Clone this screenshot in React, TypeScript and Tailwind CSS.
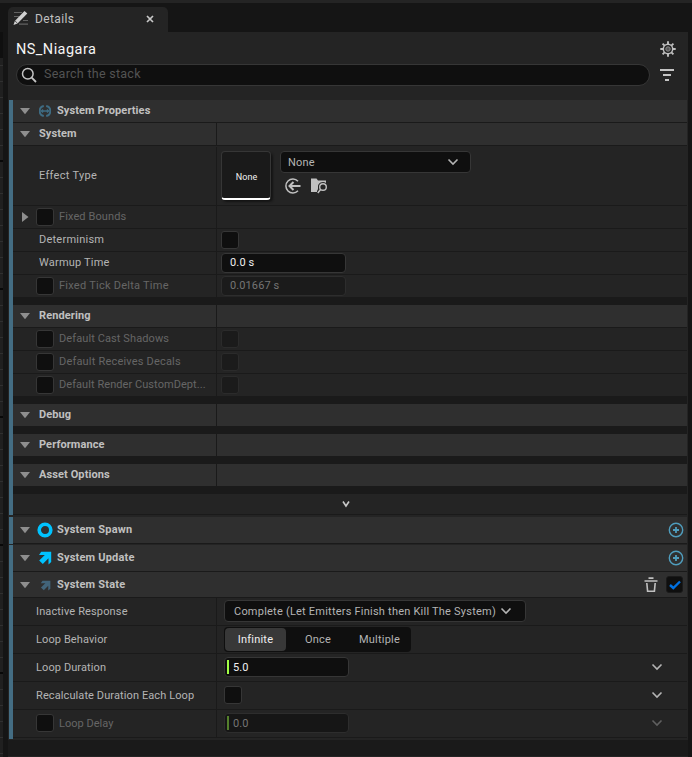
import type { ReactNode } from "react";

const Arrow = ({ open = true }: { open?: boolean }) => (
  <svg width="12" height="12" viewBox="0 0 12 12" className="shrink-0" fill="#8e8e8e">
    {open ? <path d="M1 3h10L6 9.3z" /> : <path d="M3 1v10l6.5-5z" />}
  </svg>
);

const Chevron = ({ className = "" }: { className?: string }) => (
  <svg width="12" height="8" viewBox="0 0 12 8" fill="none" stroke="currentColor" strokeWidth="1.6" className={className}>
    <path d="M1.500 1.500L6 6l4.500-4.500" />
  </svg>
);

const Box = ({ dim = false }: { dim?: boolean }) => (
  <span
    className={
      dim
        ? "w-[18px] h-[18px] shrink-0 rounded-[3px] border border-[#2b2b2b] bg-[#1b1b1b]"
        : "w-[18px] h-[18px] shrink-0 rounded-[3px] border border-[#363636] bg-[#0f0f0f]"
    }
  />
);

const Category = ({ name, gap = false }: { name: string; gap?: boolean }) => (
  <div className={gap ? "flex h-[30px] border-b-8 border-[#1a1a1a] bg-[#2f2f2f]" : "flex h-[23px] border-b border-[#1a1a1a] bg-[#2f2f2f]"}>
    <div className="flex items-center w-[204px] pl-[6px] border-r border-[#1a1a1a]">
      <Arrow />
      <span className="ml-2 font-bold tracking-[0.1px] text-[#c0c0c0] -mt-px">{name}</span>
    </div>
  </div>
);

type PropProps = {
  name: string;
  height?: string;
  tracking?: string;
  check?: boolean;
  arrow?: boolean;
  children?: ReactNode;
};

const Prop = ({ name, height = "h-[23px]", tracking = "tracking-[0.14px]", check, arrow, children }: PropProps) => (
  <div className={`flex border-b border-[#1a1a1a] bg-[#242424] ${height}`}>
    <div className={`flex items-center w-[204px] shrink-0 border-r border-[#1a1a1a] ${check ? "pl-[23px]" : "pl-[26px]"}`}>
      {arrow && <span className="-ml-[17px] mr-[5px]"><Arrow open={false} /></span>}
      {check && <Box />}
      <span className={`-mt-px whitespace-nowrap ${tracking} ${check ? "ml-[5px] text-[#666]" : ""}`}>{name}</span>
    </div>
    <div className="flex flex-1 items-center">{children}</div>
  </div>
);

// taller rows of the module inputs
const ModuleProp = ({ name, tracking = "tracking-[0.1px]", check, children }: PropProps) => (
  <div className="flex h-7 border-b border-[#1a1a1a] bg-[#242424]">
    <div className="flex items-start w-[204px] shrink-0 border-r border-[#1a1a1a] pl-[23px]">
      {check && <span className="flex mt-1"><Box /></span>}
      <span className={`mt-[7px] whitespace-nowrap ${tracking} ${check ? "ml-[5px] text-[#666]" : ""}`}>{name}</span>
    </div>
    <div className="flex flex-1 items-center pb-px pl-[7px]">{children}</div>
  </div>
);

const UpArrow = ({ size, color }: { size: number; color: string }) => (
  <svg width={size} height={size} viewBox="0 0 14 14" fill={color}>
    <path d="M3.200 .8H13.200v10.200l-2.700 2.500V7.300L4.800 13 1.200 9.400 6.800 4H1z" />
  </svg>
);

const Plus = () => (
  <svg width="16" height="16" viewBox="0 0 16 16" fill="none" stroke="#4f9dbd" className="mr-[3px]">
    <circle cx="8" cy="8" r="6.700" strokeWidth="1.400" />
    <path d="M8 5v6M5 8h6" strokeWidth="1.800" />
  </svg>
);

type HeaderProps = {
  name: string;
  icon: ReactNode;
  height: string;
  tracking?: string;
  children?: ReactNode;
};

const Header = ({ name, icon, height, tracking = "tracking-[0.2px]", children }: HeaderProps) => (
  <div className={`flex items-center border-b border-[#1a1a1a] bg-[#2f2f2f] pl-[6px] ${height}`}>
    <Arrow />
    <span className="flex justify-center w-4 ml-[6px]">{icon}</span>
    <span className={`ml-1 font-bold text-[#c0c0c0] -mt-px ${tracking}`}>{name}</span>
    <div className="flex flex-1 items-center justify-end">{children}</div>
  </div>
);

const Input = ({ value, dim }: { value: string; dim?: boolean }) => (
  <div
    className={`flex items-center w-[125px] h-5 ml-1 rounded-[4px] border pl-2 ${
      dim ? "border-[#2d2d2d] bg-[#1b1b1b] text-[#757575]" : "border-[#363636] bg-[#0f0f0f] text-[#f0f0f0]"
    }`}
  >
    <span className={dim ? "-mt-px tracking-[0.1px]" : "-mt-px tracking-[0.15px]"}>{value}</span>
  </div>
);

const ModuleInput = ({ value, dim }: { value: string; dim?: boolean }) => (
  <div
    className={`flex items-center w-[125px] h-5 rounded-[4px] border pl-[2px] ${
      dim ? "border-[#2d2d2d] bg-[#161616] text-[#757575]" : "border-[#363636] bg-[#0f0f0f] text-[#f0f0f0]"
    }`}
  >
    <span className={`w-[2px] h-[14px] mr-1 ${dim ? "bg-[#54802c]" : "bg-[#a1ff45]"}`} />
    <span className="tracking-[0.1px] mt-px">{value}</span>
  </div>
);

// strip of the graph editor that shows on the left of the panel
const GraphEdge = () => (
  <div className="w-[3px] mt-[29px] bg-[#202020] border-t-[26px] border-[#0f0f0f] overflow-hidden">
    <div className="-mt-2">
      {Array.from({ length: 44 }, (_, i) => (
        <div key={i} className={i % 8 === 6 ? "h-4 border-b-2 border-[#080808]" : "h-4 border-b border-[#303030]"} />
      ))}
    </div>
  </div>
);

const App = () => {
  return (
    <div className="flex flex-col w-[692px] h-[757px] overflow-hidden bg-[#151515] border-t-[3px] border-[#242424] font-[Roboto,sans-serif] text-[11px] leading-[14px] tracking-[0.22px] text-[#b4b4b4]">
      <div className="flex flex-1 min-h-0">
        <GraphEdge />
        <div className="flex flex-col w-[680px] ml-[5px] pt-1">
          <div className="flex items-center shrink-0 w-40 h-[25px] rounded-t-[5px] bg-[#242424] pl-[5px]">
            <svg width="16" height="16" viewBox="0 0 16 16" className="-mt-[3px]">
              <path d="M1 2.500h8M1 6.500h5M10 10.500h5M6 14.200h9" stroke="#626262" strokeWidth="1.200" />
              <path d="M0.500 15l1.300-4L11.500 1l2.800 2.600L4.500 13.600z" fill="#d0d0d0" />
              <path d="M1.900 10.800l2.600 2.500" stroke="#242424" strokeWidth="0.700" />
            </svg>
            <span className="ml-[6px] -mt-px text-[12px] leading-4 tracking-[0.38px] text-[#c0c0c0]">Details</span>
            <svg width="8" height="8" viewBox="0 0 8 8" stroke="#c8c8c8" strokeWidth="1.700" className="ml-auto mr-[14px] -mt-[2px]">
              <path d="M1 1l6 6M7 1L1 7" />
            </svg>
          </div>

          <div className="flex flex-col flex-1 min-h-0 bg-[#242424]">
            <div className="flex items-center justify-between h-[33px] shrink-0 pl-2 pr-3">
              <span className="mt-[2px] text-[14.500px] leading-5 tracking-[0.45px] text-[#f5f5f5]">NS_Niagara</span>
              <svg width="16" height="16" viewBox="0 0 16 16" fill="none" stroke="#c0c0c0">
                <circle cx="8" cy="8" r="4.700" strokeWidth="1.500" />
                <circle cx="8" cy="8" r="2.200" strokeWidth="1" stroke="#8a8a8a" fill="#555" />
                <path d="M8 .3v3M8 12.700v3M.3 8h3M12.700 8h3M2.600 2.600l2 2M11.400 11.400l2 2M2.600 13.400l2-2M11.400 4.600l2-2" strokeWidth="1.900" />
              </svg>
            </div>
            <div className="flex items-start h-[35px] shrink-0 pl-2">
              <div className="flex items-center w-[634px] h-[22px] rounded-full border border-[#363636] bg-[#0f0f0f] -mt-px">
                <svg width="16" height="16" viewBox="0 0 16 16" fill="none" stroke="#c4c4c4" className="ml-1">
                  <circle cx="6.800" cy="6.800" r="5.300" strokeWidth="1.500" />
                  <path d="M10.700 10.700l4.300 4.300" strokeWidth="1.800" />
                </svg>
                <span className="ml-[7px] -mt-[2px] text-[12.500px] tracking-[0.27px] text-[#535353]">Search the stack</span>
              </div>
              <svg width="16" height="14" viewBox="0 0 16 14" stroke="#c4c4c4" strokeWidth="2" className="ml-[9px] mt-[3px]">
                <path d="M1 2h14M4 7h8M6 12h4" />
              </svg>
            </div>

            <div className="flex flex-col h-[656px] shrink-0 ml-px mr-px">
              <div className="shrink-0 h-[415px] border-l-4 border-[#446d83]">
                <Header
                  name="System Properties"
                  height="h-[23px]"
                  tracking="tracking-[0.1px]"
                  icon={
                    <svg width="12" height="12" viewBox="0 0 12 12" fill="none" stroke="#3e6b82" strokeWidth="2">
                      <path d="M4.800 1A5.100 5.100 0 0 0 4.800 11M7.200 1A5.100 5.100 0 0 1 7.200 11" />
                      <path d="M2 6h8M4 4.500L2.500 6 4 7.500M8 4.500L9.500 6 8 7.500" strokeWidth="1.400" />
                    </svg>
                  }
                />
                <Category name="System" />
                <Prop name="Effect Type" height="h-[60px] pt-px" tracking="tracking-[0.3px]">
                  <div className="flex items-center justify-center self-start w-[50px] h-[49px] ml-1 mt-1 rounded-[4px] border border-[#363636] border-b-2 border-b-white bg-[#1a1a1a] pt-[4px] pl-px text-[9px] tracking-[0.1px] text-[#f0f0f0] shadow-[2px_2px_2px_#151515]">
                    None
                  </div>
                  <div className="flex flex-col self-start ml-[9px] mt-1">
                    <div className="flex items-center justify-between w-[191px] h-[22px] pl-[7px] pr-[11px] rounded-[4px] border border-[#363636] bg-[#0f0f0f]">
                      <span className="mt-px">None</span>
                      <Chevron className="-mt-px" />
                    </div>
                    <div className="flex gap-[10px] ml-[5px] mt-[5px]">
                      <svg width="16" height="16" viewBox="0 0 16 16" fill="none" stroke="#c0c0c0">
                        <path d="M13 3.200A7 7 0 1 0 13 12.800" strokeWidth="1.500" />
                        <path d="M15.500 8H5M8.500 4L4.500 8l4 4" strokeWidth="2" />
                      </svg>
                      <svg width="17" height="16" viewBox="0 0 17 16" fill="#c0c0c0">
                        <path d="M0 .5H5.500l1.500 2H15V5A5 5 0 0 0 7 9.500c0 1.500 0 2-1 3.500v1H0z" />
                        <circle cx="12" cy="9" r="3.300" fill="none" stroke="#c0c0c0" strokeWidth="1.400" />
                        <path d="M9.600 11.500L6.800 15" stroke="#c0c0c0" strokeWidth="1.500" />
                      </svg>
                    </div>
                  </div>
                </Prop>
                <Prop name="Fixed Bounds" check arrow tracking="tracking-[0.1px]" />
                <Prop name="Determinism" tracking="tracking-[0.24px]">
                  <span className="flex ml-1"><Box /></span>
                </Prop>
                <Prop name="Warmup Time" tracking="tracking-[0.2px]">
                  <Input value="0.0 s" />
                </Prop>
                <Prop name="Fixed Tick Delta Time" check height="h-[22px] border-b-0" tracking="tracking-[0.25px]">
                  <Input value="0.01667 s" dim />
                </Prop>
                <div className="h-2 bg-[#1a1a1a]" />
                <Category name="Rendering" />
                <Prop name="Default Cast Shadows" check tracking="tracking-[0.1px]">
                  <span className="flex ml-1"><Box dim /></span>
                </Prop>
                <Prop name="Default Receives Decals" check tracking="tracking-[0.19px]">
                  <span className="flex ml-1"><Box dim /></span>
                </Prop>
                <Prop name="Default Render CustomDept..." check height="h-[22px] border-b-0" tracking="tracking-[0.06px]">
                  <span className="flex ml-1"><Box dim /></span>
                </Prop>
                <div className="h-2 bg-[#1a1a1a]" />
                <Category name="Debug" gap />
                <Category name="Performance" gap />
                <Category name="Asset Options" gap />
                <div className="flex items-center justify-center h-[21px] border-b border-[#1a1a1a] bg-[#242424]">
                  <svg width="8" height="8" viewBox="0 0 8 8" fill="none" stroke="#c8c8c8" strokeWidth="1.600" className="mr-[9px]">
                    <path d="M1 1.500l3 4.500 3-4.500" />
                  </svg>
                </div>
              </div>

              <div className="shrink-0 mt-[2px] border-l-4 border-[#446d83]">
                <Header
                  name="System Spawn"
                  height="h-[27px]"
                  icon={
                    <svg width="16" height="16" viewBox="0 0 16 16" fill="none" stroke="#00c3ff" strokeWidth="3.600">
                      <circle cx="8" cy="8" r="5.800" />
                    </svg>
                  }
                >
                  <Plus />
                </Header>
              </div>

              <div className="shrink-0 mt-px border-l-4 border-[#446d83] bg-[#242424] pb-px">
                <Header name="System Update" height="h-[27px]" icon={<UpArrow size={14} color="#00c3ff" />}>
                  <Plus />
                </Header>
                <Header name="System State" height="h-[26px] pt-px" icon={<UpArrow size={11} color="#42647a" />}>
                  <svg width="16" height="16" viewBox="0 0 16 16" fill="none" stroke="#c0c0c0" className="-mt-px">
                    <path d="M5.500 1.200h5M1.500 4h13" strokeWidth="1.700" />
                    <path d="M3.800 6l.8 8.200h6.800l.8-8.200" strokeWidth="1.600" />
                  </svg>
                  <span className="flex items-center justify-center w-[17px] h-[17px] -mt-px ml-[7px] mr-1 rounded-[3px] border border-[#1a1a1a] bg-[#0f0f0f]">
                    <svg width="12" height="10" viewBox="0 0 12 10" fill="none" stroke="#0070e0" strokeWidth="2.400">
                      <path d="M1 5l3.300 3L11 1.500" />
                    </svg>
                  </span>
                </Header>
                <ModuleProp name="Inactive Response" tracking="tracking-[0.14px]">
                  <div className="flex items-center w-[302px] h-[22px] pl-[9px] rounded-[4px] border border-[#363636] bg-[#0f0f0f]">
                    <span className="mt-px whitespace-nowrap">Complete (Let Emitters Finish then Kill The System)</span>
                    <Chevron className="ml-1 -mt-px" />
                  </div>
                </ModuleProp>
                <ModuleProp name="Loop Behavior">
                  <div className="flex items-center w-[187px] h-[25px] mt-px p-px rounded-[4px] bg-[#0f0f0f]">
                    <span className="flex items-center justify-center w-[61px] h-[23px] rounded-[4px] bg-[#383838] text-[#f0f0f0]">Infinite</span>
                    <span className="w-[64px] text-center">Once</span>
                    <span className="w-[59px] text-center">Multiple</span>
                  </div>
                </ModuleProp>
                <ModuleProp name="Loop Duration">
                  <ModuleInput value="5.0" />
                  <Chevron className="ml-auto mr-6" />
                </ModuleProp>
                <ModuleProp name="Recalculate Duration Each Loop">
                  <Box />
                  <Chevron className="ml-auto mr-6" />
                </ModuleProp>
                <ModuleProp name="Loop Delay" check tracking="tracking-[0.02px]">
                  <ModuleInput value="0.0" dim />
                  <Chevron className="ml-auto mr-6 text-[#606060]" />
                </ModuleProp>
              </div>
              <div className="mt-px -ml-px -mr-px flex-1 bg-[#1a1a1a]" />
            </div>
          </div>
        </div>
      </div>
    </div>
  );
};

export default App;
